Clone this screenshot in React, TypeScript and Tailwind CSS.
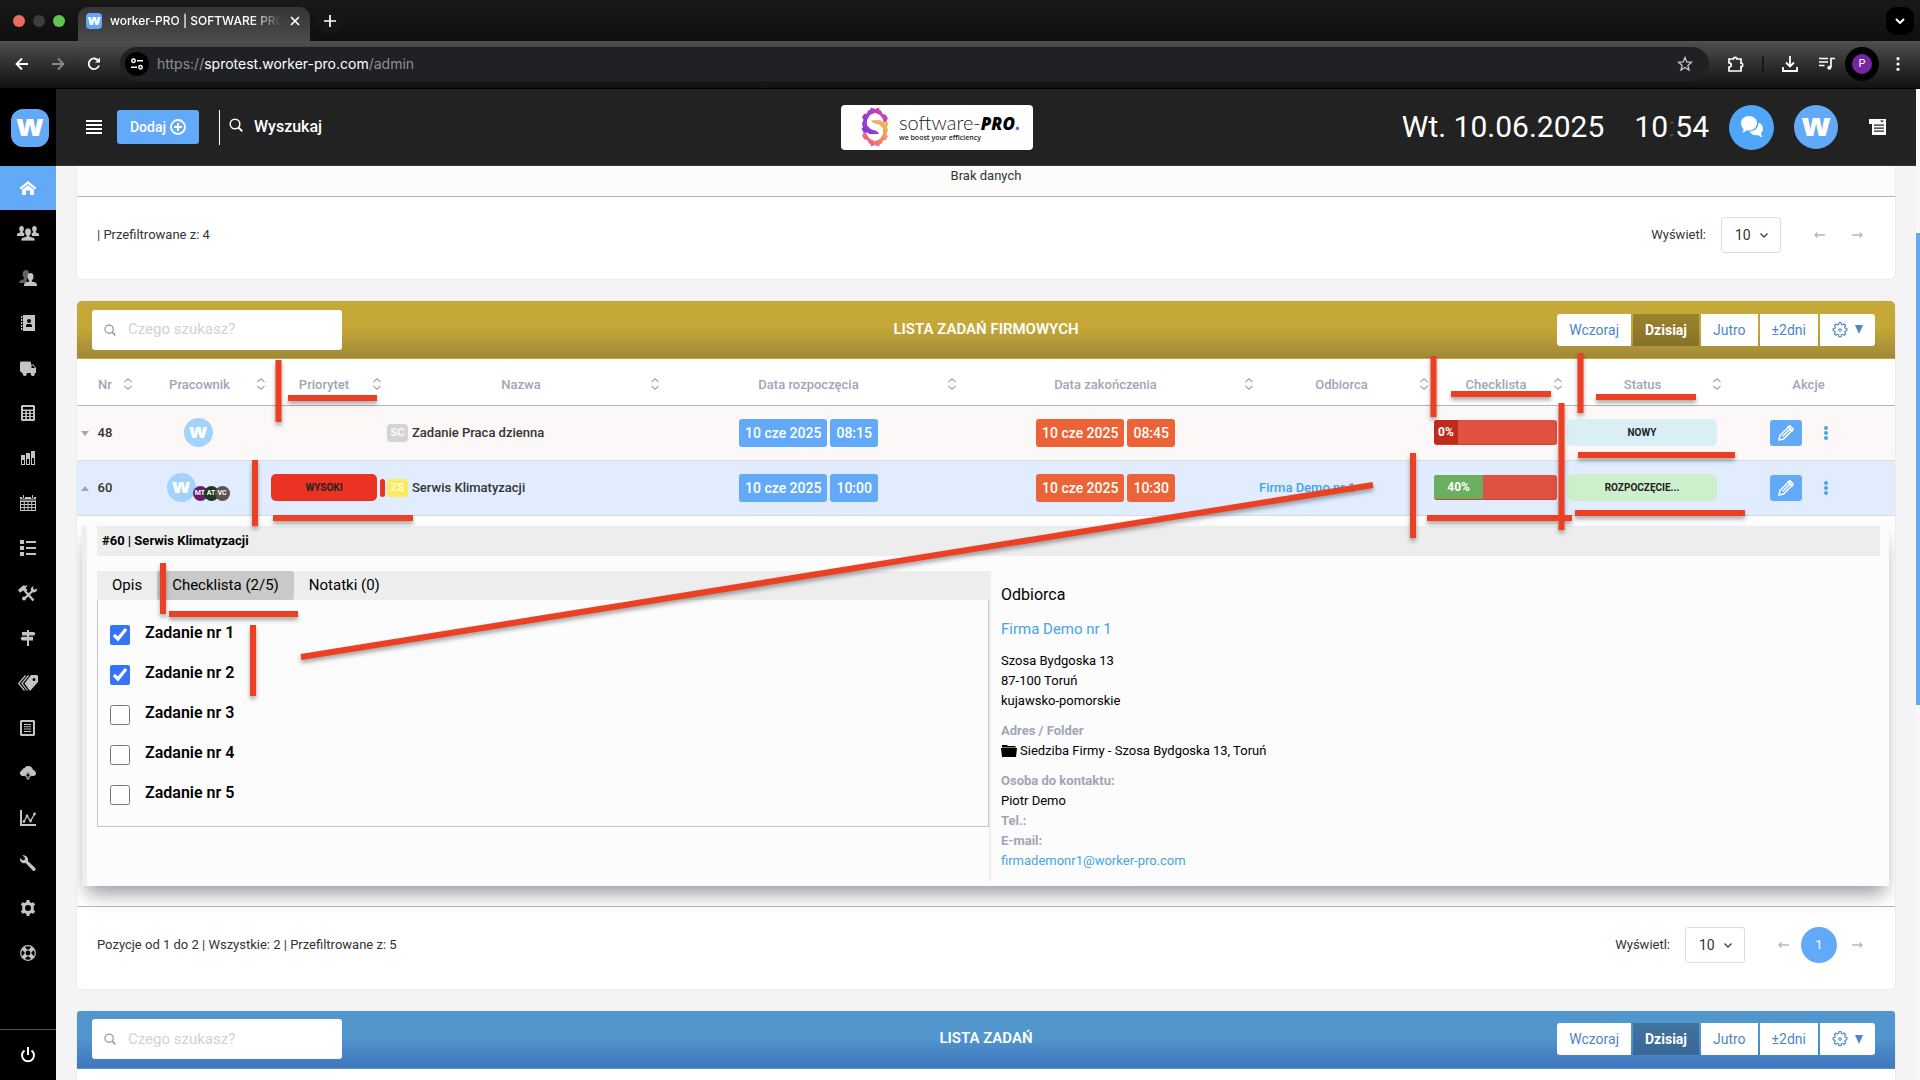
import { type JSX, type ReactNode } from 'react';

const NAV_ICONS: { label: string; icon: ReactNode }[] = [
  {
    label: 'Klienci',
    icon: (
      <svg viewBox="0 0 22 16" className="h-4 w-[22px]" fill="currentColor">
        <path d="M4.5 1c1.6 0 2.4 1.2 2.4 2.8 0 1.100-.4 2.200-1.100 2.800v1c1 .3 1.500.6 1.900 1l-1 2.400H0V9.800C0 8.500 1.500 8 3.300 7.600v-1C2.600 6 2.200 4.900 2.200 3.800 2.200 2.200 2.900 1 4.500 1z" />
        <path d="M17.500 1c-1.600 0-2.400 1.200-2.400 2.800 0 1.100.4 2.200 1.100 2.800v1c-1 .3-1.500.6-1.900 1l1 2.400H22V9.800c0-1.300-1.500-1.800-3.300-2.200v-1c.7-.6 1.100-1.700 1.100-2.800 0-1.600-.7-2.800-2.300-2.800z" />
        <path
          d="M11 3c2.200 0 3.300 1.600 3.300 3.700 0 1.500-.6 2.900-1.500 3.700v1.200c2.700.3 5.200 1.200 5.200 2.900V16H4v-1.500c0-1.700 2.500-2.600 5.200-2.900v-1.200c-.9-.8-1.500-2.200-1.500-3.700C7.700 4.600 8.800 3 11 3z"
          stroke="#000"
          strokeWidth="0.800"
        />
      </svg>
    ),
  },
  {
    label: 'Pracownicy',
    icon: (
      <svg viewBox="0 0 18 16" className="h-4 w-[18px]" fill="currentColor">
        <path
          d="M7 0c2.300 0 3.200 1.700 3 3.700-.2 1.700-1 3-1.800 3.600v1.500L7 13H0c0-2.300 2-3.300 4.800-3.800V7.500C4 6.700 3.600 5.400 3.600 4 3.600 1.800 4.700 0 7 0z"
          opacity="0.500"
        />
        <path d="M11.500 3c2.100 0 3.100 1.700 3 3.700-.1 1.700-.8 3-1.700 3.700v1.200c2.700.4 5.200 1.300 5.200 3.400v1H5v-1c0-2.100 2.500-3 5.200-3.400v-1.200c-.9-.7-1.600-2-1.700-3.700-.1-2 .9-3.700 3-3.700z" />
      </svg>
    ),
  },
  {
    label: 'Kontakty',
    icon: (
      <svg viewBox="0 0 16 16" className="size-4" fill="currentColor">
        <path fillRule="evenodd" d="M3 0h12v16H3zm6 4a2 2 0 1 0 0 4 2 2 0 0 0 0-4zM6 12h6v-1.500C12 9.300 10.800 9 9 9s-3 .3-3 1.500z" />
        <path d="M1 1h1.300v2H1zM1 4h1.300v2H1zM1 7h1.300v2H1zM1 10h1.300v2H1zM1 13h1.300v2H1z" />
      </svg>
    ),
  },
  {
    label: 'Flota',
    icon: (
      <svg viewBox="0 0 16 16" className="size-4" fill="currentColor">
        <path fillRule="evenodd" d="M1 1.500h9l1 1v2h2.500L16 8v5h-1.500a2 2 0 1 1-3.400 0H6.500a2 2 0 1 1-3.500 0H2l-2-2V2.500zM11.500 5.500V8H15l-1.900-2.500z" />
      </svg>
    ),
  },
  {
    label: 'Kalkulator',
    icon: (
      <svg viewBox="0 0 16 16" className="size-4" fill="currentColor">
        <path
          fillRule="evenodd"
          d="M2 0h12l1 1v14l-1 1H2l-1-1V1zM3 2v2.500h10V2zM3 6v2h2.300V6zm3.900 0v2h2.200V6zm3.800 0v2H13V6zM3 9v2h2.300V9zm3.900 0v2h2.200V9zm3.800 0v2H13V9zM3 12v2h2.300v-2zm3.900 0v2h2.200v-2zm3.800 0v2H13v-2z"
        />
      </svg>
    ),
  },
  {
    label: 'Raporty',
    icon: (
      <svg viewBox="0 0 16 16" className="size-4" fill="currentColor">
        <path fillRule="evenodd" d="M1 5h4v10H1zm1 5v4h2v-4zM6 3h4v12H6zm1 6v5h2V9zM11 1h4v14h-4zm1 7v6h2V8z" />
      </svg>
    ),
  },
  {
    label: 'Kalendarz',
    icon: (
      <svg viewBox="0 0 16 16" className="size-4" fill="currentColor">
        <path fillRule="evenodd" d="M0 5.500h16V16H0zM1 7v2h2.800V7zm3.800 0v2h2.700V7zm3.700 0v2h2.700V7zm3.700 0v2H15V7zM1 10v2h2.800v-2zm3.800 0v2h2.700v-2zm3.700 0v2h2.700v-2zm3.700 0v2H15v-2zM1 13v2h2.800v-2zm3.800 0v2h2.700v-2zm3.700 0v2h2.700v-2zm3.700 0v2H15v-2z" />
        <path d="M0 2h2v1.500h3V2h6v1.500h3V2h2v2.500H0zM3 0h1v3H3zM12 0h1v3h-1z" />
      </svg>
    ),
  },
  {
    label: 'Zadania',
    icon: (
      <svg viewBox="0 0 16 16" className="size-4" fill="currentColor">
        <path d="M0 0h4v4H0zM0 6h4v4H0zM0 12h4v4H0zM6 1h10v2H6zM6 7h10v2H6zM6 13h10v2H6z" />
      </svg>
    ),
  },
  {
    label: 'Serwis',
    icon: (
      <svg viewBox="0 0 20 16" className="h-4 w-5" fill="currentColor">
        <path d="M0 5l5-4.500 5 .3-2.500 2 1.800 2L7 7.500 5 5.500 2 7.800z" />
        <path d="M7.500 6.500l8 9M6 14l9-8.500" stroke="currentColor" strokeWidth="2.400" fill="none" />
        <path d="M13.500 6.800c-1.500-2.300-.3-5 2-5.800L15 3.500l1.800 1.300L19 3.500c.6 2.800-2 5-5.500 3.300z" />
        <circle cx="6" cy="13.500" r="2" />
      </svg>
    ),
  },
  {
    label: 'Lokalizacje',
    icon: (
      <svg viewBox="0 0 16 16" className="size-4" fill="currentColor">
        <path d="M7 0h2v2h5l1.500 1.800L14 5.600H9v1.200h4v3.600H9V16H7v-5.600H2L.5 8.600 2 6.800h5V5.600H2V2h5z" />
      </svg>
    ),
  },
  {
    label: 'Cennik',
    icon: (
      <svg viewBox="0 0 20 16" className="h-4 w-5" fill="currentColor">
        <path fillRule="evenodd" d="M13 0h6l1 1v6l-8 9-5.500-7.500zm3 3a1.500 1.500 0 1 0 0 3 1.500 1.500 0 0 0 0-3z" />
        <path d="M10.500.5L4 8.500 9.500 15.500M7.500.5L.7 8.500 6.500 15.500" fill="none" stroke="currentColor" strokeWidth="1.200" />
      </svg>
    ),
  },
  {
    label: 'Dokumenty',
    icon: (
      <svg viewBox="0 0 16 16" className="size-4" fill="currentColor">
        <path fillRule="evenodd" d="M1 0h13l1 1v14l-1 1H1l-1-1V1zm1 2v12h11V2z" />
        <path d="M4 4h7v1H4zM4 6.300h7v1H4zM4 8.600h7v1H4zM4 11h7v1H4z" />
      </svg>
    ),
  },
  {
    label: 'Chmura',
    icon: (
      <svg viewBox="0 0 16 16" className="size-4" fill="currentColor">
        <path d="M13 5c1.800.3 3 1.700 3 3.300C16 10 14.700 11 13 11h-1.500L8 7l-3.500 4H3c-1.700 0-3-1.200-3-2.800 0-1.500 1-2.600 2.300-2.900C2.400 3.500 3.600 3 4.500 3.200 5.200 1.900 6.500 1 8.200 1 10.800 1 12.800 2.700 13 5z" />
        <path d="M8 7.800l3 3.200H9v3H7v-3H5z" fill="#000" stroke="currentColor" strokeWidth="1" />
      </svg>
    ),
  },
  {
    label: 'Statystyki',
    icon: (
      <svg viewBox="0 0 16 16" className="size-4" fill="none" stroke="currentColor">
        <path d="M1 0v15h15" strokeWidth="2" />
        <path d="M4 11.500L7 6l3.500 5L14.500 4" strokeWidth="1.300" />
        <path d="M4 11.500h.01M7 6h.01M10.500 11h.01M14.500 4h.01" strokeWidth="2.800" strokeLinecap="round" />
      </svg>
    ),
  },
  {
    label: 'Narzędzia',
    icon: (
      <svg viewBox="0 0 16 16" className="size-4" fill="currentColor">
        <path d="M2.500.4L5 2.800 4.600 5l-2.100.2L.3 3C-.5 5.500.8 8 3.500 8.200c.8.100 1.500 0 2.200-.3l7 7.500c.6.700 1.700.8 2.400.1.700-.6.700-1.700.1-2.400l-7.300-7C8.400 4.600 8 3 7 1.800 6 .6 4.200-.3 2.500.4z" />
      </svg>
    ),
  },
  {
    label: 'Ustawienia',
    icon: (
      <svg viewBox="0 0 16 16" className="size-4" fill="currentColor">
        <path
          fillRule="evenodd"
          d="M6.700 0h2.600l.4 2 1.700 1 2-.8L15.200 4.500l-1.500 1.600v3.800l1.500 1.600-1.800 2.300-2-.8-1.700 1-.4 2H6.700l-.4-2-1.700-1-2 .8L.8 11.500l1.500-1.600V6.100L.8 4.500l1.800-2.300 2 .8 1.700-1zM8 5a3 3 0 1 0 0 6 3 3 0 0 0 0-6z"
        />
      </svg>
    ),
  },
  {
    label: 'Pomoc',
    icon: (
      <svg viewBox="0 0 16 16" className="size-4" fill="none" stroke="currentColor">
        <circle cx="8" cy="8" r="7.300" strokeWidth="1.200" />
        <circle cx="8" cy="8" r="3" strokeWidth="1.200" />
        <path d="M3 3l2.800 2.800M13 3l-2.800 2.800M3 13l2.800-2.800M13 13l-2.800-2.800" strokeWidth="4" />
      </svg>
    ),
  },
];

const COLUMNS = [
  { name: 'Nr', width: 'w-[56px]', sort: true },
  { name: 'Pracownik', width: 'w-[133px]', sort: true },
  { name: 'Priorytet', width: 'w-[116px]', sort: true },
  { name: 'Nazwa', width: 'w-[278px]', sort: true },
  { name: 'Data rozpoczęcia', width: 'w-[297px]', sort: true },
  { name: 'Data zakończenia', width: 'w-[297px]', sort: true },
  { name: 'Odbiorca', width: 'w-[175px]', sort: true },
  { name: 'Checklista', width: 'w-[134px]', sort: true },
  { name: 'Status', width: 'w-[159px]', sort: true },
  { name: 'Akcje', width: 'w-[173px]', sort: false },
];

const TASKS = [
  { id: 1, done: true },
  { id: 2, done: true },
  { id: 3, done: false },
  { id: 4, done: false },
  { id: 5, done: false },
];

function SearchIcon({ className }: { className: string }): JSX.Element {
  return (
    <svg viewBox="0 0 14 14" className={className} fill="none" stroke="currentColor">
      <circle cx="6" cy="6" r="4.800" strokeWidth="1.500" />
      <path d="M9.500 9.500l3.800 3.800" strokeWidth="1.900" />
    </svg>
  );
}

function LetterLogo({ className }: { className: string }): JSX.Element {
  return (
    <span
      className={`flex shrink-0 items-center justify-center font-['Open_Sans',sans-serif] font-extrabold text-white ${className}`}
    >
      w
    </span>
  );
}

function BrowserBar(): JSX.Element {
  return (
    <div className="shrink-0 font-['Inter',sans-serif]">
      <div className="flex h-[41px] items-end bg-linear-to-b from-[#191919] to-[#0e0e0e] pr-1.5">
        <div className="flex h-full w-[78px] items-center gap-2 pl-[13px]">
          <span className="size-3 rounded-full bg-[#ed6a5e]" />
          <span className="size-3 rounded-full bg-[#3d3d3d]" />
          <span className="size-3 rounded-full bg-[#61c554]" />
        </div>
        <div className="flex h-[34px] w-[232px] items-center rounded-t-[10px] bg-linear-to-b from-[#353535] to-[#4a4a4a] px-2 pb-1.5">
          <LetterLogo className="size-4 rounded bg-[#62a9f8] pb-0.5 text-sm leading-none" />
          <span className="ml-2 w-[172px] text-xs font-medium whitespace-nowrap text-white [mask-image:linear-gradient(to_right,black_82%,transparent)]">
            worker-PRO | SOFTWARE PRO
          </span>
          <button aria-label="Zamknij kartę" className="ml-2">
            <svg viewBox="0 0 10 10" className="size-2.5" stroke="#fff" strokeWidth="1.700">
              <path d="M1 1l8 8M9 1l-8 8" />
            </svg>
          </button>
        </div>
        <button aria-label="Nowa karta" className="ml-1.5 flex size-[27px] items-center justify-center self-center rounded-full bg-[#161616]">
          <svg viewBox="0 0 12 12" className="size-3" stroke="#fff" strokeWidth="1.700">
            <path d="M6 0v12M0 6h12" />
          </svg>
        </button>
        <button aria-label="Karty" className="ml-auto flex size-7 items-center justify-center self-center rounded-[10px] bg-black">
          <svg viewBox="0 0 10 6" className="h-1.5 w-2.5" fill="none" stroke="#fff" strokeWidth="2">
            <path d="M1 1l4 4 4-4" />
          </svg>
        </button>
      </div>
      <div className="flex h-12 items-center border-b border-black bg-linear-to-b from-[#505050] to-[#111] pr-5 pb-0.5 pl-[15px]">
        <button aria-label="Wstecz">
          <svg viewBox="0 0 14 14" className="size-3.5" fill="none" stroke="#fff" strokeWidth="1.800">
            <path d="M13 7H1.500M7 1.500L1.500 7 7 12.500" />
          </svg>
        </button>
        <button aria-label="Dalej" className="ml-[22px]">
          <svg viewBox="0 0 14 14" className="size-3.5" fill="none" stroke="#8a8a8a" strokeWidth="1.800">
            <path d="M1 7h11.500M7 1.500L12.500 7 7 12.500" />
          </svg>
        </button>
        <button aria-label="Odśwież" className="ml-[22px]">
          <svg viewBox="0 0 14 14" className="size-3.5" fill="none" stroke="#fff" strokeWidth="1.800">
            <path d="M12 8.500A5.300 5.300 0 1 1 11.500 4" />
            <path d="M13 .5v5H8z" fill="#fff" stroke="none" />
          </svg>
        </button>
        <div className="ml-[19px] flex h-[34px] flex-1 items-center rounded-full bg-[#202124] pr-4 pl-[5px]">
          <span className="flex size-6 items-center justify-center rounded-full bg-black">
            <svg viewBox="0 0 12 12" className="size-3" fill="none" stroke="#fff" strokeWidth="1.500">
              <circle cx="2.500" cy="2.700" r="1.700" />
              <circle cx="9.500" cy="9.300" r="1.700" />
              <path d="M6 2.700h6M0 9.300h6" />
            </svg>
          </span>
          <span className="ml-2 text-sm text-[#8f8f91]">
            https://<span className="text-white">sprotest.worker-pro.com</span>/admin
          </span>
          <svg viewBox="0 0 16 16" className="ml-auto size-4" fill="none" stroke="#c7c7c7" strokeWidth="1.300">
            <path d="M8 1.500l1.800 4.400 4.700.4-3.600 3.100 1.100 4.600L8 11.500 4 14l1.100-4.600L1.500 6.300l4.700-.4z" />
          </svg>
        </div>
        <svg viewBox="0 0 18 18" className="ml-[18px] size-[18px]" fill="none" stroke="#fff" strokeWidth="1.700">
          <path d="M2 4h4.500a1.700 1.700 0 0 1 3.400 0H14v4.200a1.700 1.700 0 0 1 0 3.400V16H2v-3.800c3-.5 3-4 0-4.400z" />
        </svg>
        <span className="ml-[17px] h-4 w-0.5 bg-[#181818]" />
        <svg viewBox="0 0 16 16" className="ml-[18px] size-4" fill="none" stroke="#fff" strokeWidth="1.800">
          <path d="M8 0v10M4 6.500l4 4 4-4M1 11v4h14v-4" />
        </svg>
        <svg viewBox="0 0 16 14" className="ml-[21px] h-3.5 w-4" fill="none" stroke="#fff" strokeWidth="1.700">
          <path d="M0 1.500h9M0 5h9M0 8.500h5.500M12 10.500V1.500h4" />
          <circle cx="10.300" cy="10.800" r="2" fill="#fff" stroke="none" />
        </svg>
        <span className="ml-2.5 flex size-[34px] items-center justify-center rounded-full bg-black">
          <span className="flex size-5 items-center justify-center rounded-full bg-[#7627a0] text-[11px] text-white">P</span>
        </span>
        <button aria-label="Menu przeglądarki" className="ml-[17px]">
          <svg viewBox="0 0 4 14" className="h-3.5 w-1" fill="#fff">
            <circle cx="2" cy="1.700" r="1.600" />
            <circle cx="2" cy="7" r="1.600" />
            <circle cx="2" cy="12.300" r="1.600" />
          </svg>
        </button>
      </div>
    </div>
  );
}

function Sidebar(): JSX.Element {
  return (
    <aside className="flex w-14 shrink-0 flex-col bg-black text-[#c4c4c4]">
      <div className="flex h-[77px] items-center justify-center pl-1">
        <LetterLogo className="size-[38px] rounded-xl bg-[#62a9f8] pb-1.5 text-[30px] leading-none" />
      </div>
      <nav className="flex flex-col">
        <a href="#home" aria-label="Start" className="flex h-11 items-center justify-center bg-[#62a9f8] text-white">
          <svg viewBox="0 0 16 16" className="size-4" fill="currentColor">
            <path d="M8 1l8 6.500v1.800l-1 .3L8 4 1 9.600l-1-.3V7.500z" />
            <path d="M2 9.800L8 5.200l6 4.600V15h-4v-4.500H6V15H2z" />
          </svg>
        </a>
        {NAV_ICONS.map((item) => (
          <a key={item.label} href="#nav" aria-label={item.label} className="flex h-[45px] items-center justify-center">
            {item.icon}
          </a>
        ))}
      </nav>
      <a
        href="#logout"
        aria-label="Wyloguj"
        className="mt-auto flex h-[51px] items-center justify-center border-t border-[#555] text-white"
      >
        <svg viewBox="0 0 16 16" className="size-4" fill="none" stroke="currentColor" strokeWidth="2">
          <path d="M8 0v8M4.500 3.500a6 6 0 1 0 7 0" />
        </svg>
      </a>
    </aside>
  );
}

function CompanyLogo(): JSX.Element {
  return (
    <div className="flex h-[45px] w-48 items-center rounded bg-white pl-5 font-['Lato',sans-serif]">
      <svg viewBox="0 0 28 40" className="h-10 w-7" fill="none">
        <defs>
          <linearGradient id="top" x1="0" y1="1" x2="1" y2="0">
            <stop offset="0" stopColor="#5b35f5" />
            <stop offset="1" stopColor="#f0449c" />
          </linearGradient>
          <linearGradient id="bottom" x1="0" y1="1" x2="1" y2="0">
            <stop offset="0" stopColor="#e8468f" />
            <stop offset="1" stopColor="#f8c950" />
          </linearGradient>
        </defs>
        <path
          d="M27 18l-1.500-4.500 1.500-2-2.500-4-3-.5L20 3.500 18.500 3 18 .5 14 2 10 .5 9 3 7 3.500 6 6.500 3 7 1 10.500l1.500 2L1 17l1 3-1.500 2L3 25.500l3-.5 3 2 9-.5-2.500-2.500-5.500-1.500-4-4v-5.500L9 8l5-2.200L19 8l3 4 .5 3z"
          fill="url(#top)"
        />
        <path
          d="M1 22l1.500 4.500-1.500 2 2.500 4 3 .5L8 36.500l1.500.5.5 2.500 4-1.500 4 1.500 1-2.500 2-.5 1-3 3-.5 2-3.500-1.500-2L27 23l-1-3 1.500-2L25 14.500l-3 .5-3-2-9 .5 2.500 2.500 5.500 1.500 4 4v5.500L19 32l-5 2.200L9 32l-3-4-.5-3z"
          fill="url(#bottom)"
        />
        <path d="M3 25.500l3-.5 3 2h9l-2.500-3-5.500-1.500-4-4v-5l-4 2 .5 3.500-1 3z" fill="url(#top)" />
      </svg>
      <div className="ml-2.5">
        <div className="text-xl leading-5 font-light whitespace-nowrap text-[#222]">
          software-<span className="font-['Open_Sans',sans-serif] text-[17px] leading-5 font-extrabold text-black italic">PRO</span>
          <span className="font-black text-[#a63ae0]">.</span>
        </div>
        <div className="font-['Open_Sans',sans-serif] text-[7px] leading-2 font-semibold text-[#222]">we boost your efficiency</div>
      </div>
    </div>
  );
}

function Header(): JSX.Element {
  return (
    <header className="grid h-[77px] shrink-0 grid-cols-[8fr_auto_9fr] items-center border-b border-[#3a3537] bg-[#222] text-white">
      <div className="flex items-center pl-[30px]">
        <button aria-label="Menu">
          <svg viewBox="0 0 16 14" className="h-3.5 w-4" fill="#fff">
            <path d="M0 0h16v2H0zM0 4h16v2H0zM0 8h16v2H0zM0 12h16v2H0z" />
          </svg>
        </button>
        <button className="ml-[15px] flex h-[34px] w-[82px] items-center justify-center gap-1 rounded-[3px] bg-[#62a9f8] text-sm font-medium">
          Dodaj
          <svg viewBox="0 0 16 16" className="size-4" fill="none" stroke="#fff" strokeWidth="1.800">
            <circle cx="8" cy="8" r="7" />
            <path d="M8 4v8M4 8h8" strokeWidth="2" />
          </svg>
        </button>
        <label className="ml-5 flex h-[35px] items-center border-l border-white pl-[9px]">
          <SearchIcon className="mb-1 size-3.5" />
          <input
            type="text"
            aria-label="Wyszukaj"
            placeholder="Wyszukaj"
            className="ml-[11px] w-60 bg-transparent text-base font-medium outline-none placeholder:text-white"
          />
        </label>
      </div>
      <CompanyLogo />
      <div className="flex items-center justify-end pr-[30px]">
        <span className="text-[30px] leading-9 whitespace-nowrap">Wt. 10.06.2025</span>
        <span className="ml-[30px] text-[30px] leading-9">
          10<span className="text-[#444]">:</span>54
        </span>
        <button aria-label="Czat" className="ml-5 flex size-[45px] items-center justify-center rounded-full bg-[#50a6f7]">
          <svg viewBox="0 0 22 22" className="size-[22px]" fill="#fff">
            <path d="M8 0c4.500 0 8 3 8 7s-3.500 7.500-8 7.500c-.8 0-1.600-.1-2.300-.3C4.500 15.500 3 16.500 1 16.500c1-1 1.500-2.300 1.500-3.600C1 11.500 0 9.500 0 7c0-4 3.500-7 8-7z" />
            <path d="M17.500 6.500c2.500 1 4.500 3.200 4.500 6 0 2-.8 3.500-2 4.600 0 1.500.5 2.900 1.500 3.900-2 0-3.500-.7-4.600-2-4 .8-7-1-8.400-3.500 5-.3 9.200-3.500 9-9z" />
          </svg>
        </button>
        <LetterLogo className="ml-5 size-11 rounded-full bg-[#62a9f8] pb-1.5 text-[32px] leading-none" />
        <button aria-label="Aktualności" className="ml-[31px]">
          <svg viewBox="0 0 17 16" className="h-4 w-[17px]" fill="#fff">
            <path fillRule="evenodd" d="M0 0h17v16H3V5H0zM5 5.500v1.200h10V5.500zm0 3v1.200h10V8.500zm0 3v1.200h10v-1.200zM11 1.500L13 3.500 15 1.500z" />
          </svg>
        </button>
      </div>
    </header>
  );
}

function Arrow({ right = false }: { right?: boolean }): JSX.Element {
  return (
    <svg viewBox="0 0 11 6" className="h-1.5 w-[11px]" fill="none" stroke="#b8b8b8" strokeWidth="1.300">
      {right ? <path d="M0 3h10M7.500.5L10 3 7.500 5.500" /> : <path d="M11 3H1M3.500.5L1 3l2.500 2.500" />}
    </svg>
  );
}

function TableFooter({ id, info, page }: { id: string; info: string; page?: number }): JSX.Element {
  return (
    <div className="flex items-center border-t border-[#b5b5b5] px-5 pt-5 pb-[26px] text-[13px] leading-5 text-[#333]">
      <span>{info}</span>
      <label htmlFor={id} className="ml-auto">
        Wyświetl:
      </label>
      <div className="relative ml-[15px]">
        <select id={id} className="h-9 w-[60px] appearance-none rounded-[3px] border border-[#ddd] bg-white pl-[13px] text-sm text-[#333]">
          <option>10</option>
        </select>
        <svg viewBox="0 0 8 5" className="pointer-events-none absolute top-4 right-[13px] h-[5px] w-2" fill="none" stroke="#444" strokeWidth="1.400">
          <path d="M.5.500L4 4 7.500.500" />
        </svg>
      </div>
      <div className="ml-5 flex items-center">
        <button aria-label="Poprzednia" className="flex size-9 items-center justify-center">
          <Arrow />
        </button>
        {page !== undefined && (
          <button className="flex size-9 items-center justify-center rounded-full bg-[#62a9f8] text-white">{page}</button>
        )}
        <button aria-label="Następna" className="ml-0.5 flex size-9 items-center justify-center">
          <Arrow right />
        </button>
      </div>
    </div>
  );
}

function ListHeader({ title, className, activeClassName }: { title: string; className: string; activeClassName: string }): JSX.Element {
  const button = 'flex h-8 items-center bg-white px-3 text-sm text-[#4d86c8]';
  return (
    <div className={`grid h-[58px] grid-cols-[1fr_auto_1fr] items-center rounded-t-[3px] border-b px-5 ${className}`}>
      <label className="-ml-[5px] flex h-10 w-[250px] items-center rounded-[3px] bg-white pl-3 text-[#999]">
        <SearchIcon className="size-3" />
        <input
          type="text"
          aria-label={`Szukaj: ${title}`}
          placeholder="Czego szukasz?"
          className="ml-3 w-48 text-[15px] text-[#333] outline-none placeholder:text-[#d2d2d2]"
        />
      </label>
      <h2 className="pb-0.5 text-[15px] leading-5 font-semibold text-white">{title}</h2>
      <div className="flex gap-0.5 justify-self-end">
        <button className={`${button} rounded-l-[3px]`}>Wczoraj</button>
        <button className={`flex h-8 items-center px-3 text-sm font-bold text-white ${activeClassName}`}>Dzisiaj</button>
        <button className={button}>Jutro</button>
        <button className={button}>±2dni</button>
        <button aria-label="Opcje" className={`${button} gap-[7px] rounded-r-[3px]`}>
          <svg viewBox="0 0 16 16" className="size-4" fill="none" stroke="currentColor">
            <path
              strokeWidth="1.100"
              strokeLinejoin="round"
              d="M6.900.6h2.200l.3 1.800 1.200.5 1.500-1.100 1.600 1.600-1.100 1.500.5 1.200 1.800.3v2.400l-1.800.3-.5 1.200 1.100 1.500-1.600 1.600-1.500-1.100-1.200.5-.3 1.800H6.900l-.3-1.800-1.200-.5-1.500 1.100-1.600-1.600 1.100-1.500-.5-1.200-1.800-.3V6.600l1.800-.3.500-1.200-1.100-1.500 1.600-1.600 1.500 1.100 1.200-.5z"
            />
            <circle cx="8" cy="8" r="1.300" />
          </svg>
          <svg viewBox="0 0 8 9" className="h-[9px] w-2" fill="currentColor">
            <path d="M0 0h8L4 9z" />
          </svg>
        </button>
      </div>
    </div>
  );
}

function DateBadges({ date, time, color }: { date: string; time: string; color: string }): JSX.Element {
  return (
    <div className="flex justify-center gap-[3px] text-sm leading-7 font-medium text-white">
      <span className={`rounded-[3px] px-1.5 ${color}`}>{date}</span>
      <span className={`rounded-[3px] px-1.5 ${color}`}>{time}</span>
    </div>
  );
}

function Progress({ value, color }: { value: number; color: string }): JSX.Element {
  return (
    <div className="mr-1.5 ml-[5px] h-[25px] overflow-hidden rounded-[3px] border-b border-[#c94436] bg-[#e15141]">
      <div
        className={`h-full min-w-6 text-center text-xs leading-[24px] font-bold text-white ${color}`}
        style={{ width: `${value}%` }}
      >
        {value}%
      </div>
    </div>
  );
}

function Actions(): JSX.Element {
  return (
    <div className="flex items-center justify-center gap-[22px] pr-5">
      <button aria-label="Edytuj" className="flex h-[26px] w-8 items-center justify-center rounded-[3px] bg-[#62a9f8]">
        <svg viewBox="0 0 16 16" className="size-4" fill="none" stroke="#fff" strokeWidth="1.500">
          <path d="M2 10.500L10.500 2 14 5.500 5.500 14 1 15z" />
          <path d="M4.500 11.500l7-7M10 2l2-1.200L15.200 4 14 6z" />
        </svg>
      </button>
      <button aria-label="Więcej">
        <svg viewBox="0 0 4 14" className="h-3.5 w-1" fill="#46a4e4">
          <circle cx="2" cy="2" r="2" />
          <circle cx="2" cy="7" r="2" />
          <circle cx="2" cy="12" r="2" />
        </svg>
      </button>
    </div>
  );
}

function TaskDetails(): JSX.Element {
  return (
    <div className="mr-1.5 ml-[5px] border-l-[5px] border-[#eee] bg-[#fcfcfc] pr-1 pb-[5px] pl-2.5 text-left text-[13px] text-black shadow-[0_14px_18px_-6px_rgba(70,65,85,0.45),0_6px_14px_rgba(70,65,85,0.12)]">
      <div className="mr-[5px] h-[30px] bg-[#ededed] pl-[5px] text-[13px] leading-[30px] font-bold">#60 | Serwis Klimatyzacji</div>
      <div className="mt-[15px] grid grid-cols-2">
        <div className="border-r-2 border-[#eee]">
          <div role="tablist" className="flex h-[29px] bg-[#ededed] text-[15px]">
            <button role="tab" className="px-[15px]">
              Opis
            </button>
            <button role="tab" aria-selected="true" className="rounded-[3px] bg-[#c9c9c9] px-[15px]">
              Checklista (2/5)
            </button>
            <button role="tab" className="px-[15px]">
              Notatki (0)
            </button>
          </div>
          <div className="border border-t-0 border-[#c4c4c4] pt-[23px] pb-[3px] pl-3">
            {TASKS.map((task) => (
              <label key={task.id} className="flex h-10 items-start gap-[15px] text-base leading-5 font-semibold">
                <input type="checkbox" defaultChecked={task.done} className="mt-0.5 size-5 accent-[#3574f6]" />
                Zadanie nr {task.id}
              </label>
            ))}
          </div>
        </div>
        <div className="pt-3.5 pb-[10px] pl-2.5 leading-5">
          <h3 className="text-base leading-5">Odbiorca</h3>
          <a href="#firma" className="mt-3.5 block text-[15px] leading-5 text-[#46a4e4]">
            Firma Demo nr 1
          </a>
          <p className="mt-3">
            Szosa Bydgoska 13
            <br />
            87-100 Toruń
            <br />
            kujawsko-pomorskie
          </p>
          <p className="mt-2.5 font-bold text-[#a1a5b7]">Adres / Folder</p>
          <p className="flex items-center gap-[3px]">
            <svg viewBox="0 0 16 13" className="h-[13px] w-4" fill="currentColor">
              <path d="M1 1h5l1 1h7l1 1v.5H1zM0 4h16l-1 9H1z" />
            </svg>
            Siedziba Firmy - Szosa Bydgoska 13, Toruń
          </p>
          <p className="mt-2.5 font-bold text-[#a1a5b7]">Osoba do kontaktu:</p>
          <p>Piotr Demo</p>
          <p className="font-bold text-[#a1a5b7]">Tel.:</p>
          <p className="font-bold text-[#a1a5b7]">E-mail:</p>
          <a href="mailto:firmademonr1@worker-pro.com" className="block text-[#46a4e4]">
            firmademonr1@worker-pro.com
          </a>
        </div>
      </div>
    </div>
  );
}

function CompanyTasks(): JSX.Element {
  return (
    <table className="w-full table-fixed border-collapse text-center text-[13px] text-[#333]">
      <thead>
        <tr className="h-[46px] border-b border-[#b5b5b5] text-[#a1a5b7]">
          {COLUMNS.map((column) => (
            <th key={column.name} className={`relative pt-[5px] font-medium ${column.width}`}>
              {column.name}
              {column.sort && (
                <svg viewBox="0 0 8 12" className="absolute top-[19px] right-px h-3 w-2" fill="none" stroke="#a1a5b7" strokeWidth="1.200">
                  <path d="M.5 4L4 .8 7.500 4M.5 8L4 11.200 7.500 8" />
                </svg>
              )}
            </th>
          ))}
        </tr>
      </thead>
      <tbody>
        <tr className="h-[55px] border-b border-[#dcdcdc] bg-[#fdf8f8]">
          <td className="relative font-medium">
            <svg viewBox="0 0 8 5" className="absolute top-[25px] left-1 h-[5px] w-2" fill="#a1a5b7">
              <path d="M0 0h8L4 5z" />
            </svg>
            48
          </td>
          <td className="pr-[3px]">
            <LetterLogo className="mx-auto size-[29px] rounded-full bg-[#a1d3fb] pb-1 text-xl leading-none" />
          </td>
          <td />
          <td>
            <div className="flex items-center gap-1 pl-[5px] font-medium">
              <span className="h-[18px] w-[21px] rounded bg-[#d4d4d4] text-[11px] leading-[18px] text-white">SC</span>
              Zadanie Praca dzienna
            </div>
          </td>
          <td>
            <DateBadges date="10 cze 2025" time="08:15" color="bg-[#62a9f8]" />
          </td>
          <td>
            <DateBadges date="10 cze 2025" time="08:45" color="bg-[#ec6337]" />
          </td>
          <td />
          <td>
            <Progress value={0} color="bg-[#c02a1c]" />
          </td>
          <td>
            <div className="mr-[5px] ml-1 h-[27px] rounded-[5px] bg-[#daeef5] text-[10px] leading-[27px] font-bold text-[#222]">NOWY</div>
          </td>
          <td>
            <Actions />
          </td>
        </tr>
        <tr className="h-[55px] border-b border-[#d5d9e0] bg-[#e1edfe]">
          <td className="relative font-medium">
            <svg viewBox="0 0 8 5" className="absolute top-[25px] left-1 h-[5px] w-2" fill="#a1a5b7">
              <path d="M0 5h8L4 0z" />
            </svg>
            60
          </td>
          <td className="pr-[3px]">
            <div className="flex items-center justify-center text-[7px] leading-[15px] font-bold text-white">
              <LetterLogo className="size-[29px] rounded-full bg-[#a1d3fb] pb-1 text-xl leading-none" />
              <span className="mt-3 -ml-[3px] size-[15px] rounded-full bg-[#6b1d6b]">MT</span>
              <span className="mt-3 -ml-1 size-[15px] rounded-full bg-[#1e3a1e]">AT</span>
              <span className="mt-3 -ml-1 size-[15px] rounded-full bg-[#5d5355]">VC</span>
            </div>
          </td>
          <td>
            <div className="mr-[5px] ml-[5px] h-[27px] rounded-[5px] bg-[#ea3323] text-[10px] leading-[27px] font-bold text-[#222]">WYSOKI</div>
          </td>
          <td>
            <div className="-ml-0.5 flex items-center font-medium">
              <span className="mr-0.5 h-[18px] w-[5px] rounded-sm bg-[#ea3323]" />
              <span className="mr-1 h-[18px] w-[21px] rounded bg-[#fbec5b] text-[11px] leading-[18px] text-white">ZS</span>
              Serwis Klimatyzacji
            </div>
          </td>
          <td>
            <DateBadges date="10 cze 2025" time="10:00" color="bg-[#62a9f8]" />
          </td>
          <td>
            <DateBadges date="10 cze 2025" time="10:30" color="bg-[#ec6337]" />
          </td>
          <td className="pl-[5px] text-left">
            <a href="#firma" className="font-medium text-[#46a4e4]">
              Firma Demo nr 1
            </a>
          </td>
          <td>
            <Progress value={40} color="bg-[#6aae5f]" />
          </td>
          <td>
            <div className="mr-[5px] ml-1 h-[27px] rounded-[5px] bg-[#ccf0cc] text-[10px] leading-[27px] font-bold text-[#222]">
              ROZPOCZĘCIE...
            </div>
          </td>
          <td>
            <Actions />
          </td>
        </tr>
        <tr>
          <td colSpan={10} className="pt-2.5 pb-5">
            <TaskDetails />
          </td>
        </tr>
      </tbody>
    </table>
  );
}

// red marker strokes drawn over the page
function Markers(): JSX.Element {
  return (
    <svg
      className="pointer-events-none absolute top-0 left-0 h-[1080px] w-[1920px] drop-shadow-[0_3px_2px_rgba(0,0,0,0.35)]"
      viewBox="0 0 1920 1080"
      fill="none"
      stroke="#ec4024"
      strokeWidth="6"
    >
      <path d="M278.500 360v62M255 460v66M1433.500 356v61M1580.500 353v60M1561.500 403v127M1413 453v85M163 563v51M253 625v71" />
      <path d="M288 398h89M273 518h140M1451 394h100M1596 397h100M1578 455h157M1427 518h145M1575 513h170M169 614h129" />
      <path d="M301 657L1373 485" />
    </svg>
  );
}

export default function App(): JSX.Element {
  return (
    <div className="relative flex h-screen flex-col overflow-hidden bg-[#f4f4f4] font-['Roboto',sans-serif]">
      <BrowserBar />
      <div className="flex min-h-0 flex-1">
        <Sidebar />
        <div className="flex min-w-0 flex-1 flex-col">
          <Header />
          <main className="flex min-h-0 flex-1 flex-col gap-5 overflow-hidden px-5">
            <section className="shrink-0 rounded-b-md border border-t-0 border-[#ececec] bg-white">
              <p className="h-[30px] bg-[#fcfcfc] text-center text-[13px] leading-5 text-[#333]">Brak danych</p>
              <TableFooter id="size-1" info="| Przefiltrowane z: 4" />
            </section>
            <section className="shrink-0 overflow-hidden rounded-md border border-[#ececec] bg-white">
              <ListHeader
                title="LISTA ZADAŃ FIRMOWYCH"
                className="border-[#c5a837] bg-linear-to-b from-[#c5a837] from-45% to-[#a18838]"
                activeClassName="bg-linear-to-b from-[#9b832b] to-[#87722c]"
              />
              <CompanyTasks />
              <TableFooter id="size-2" info="Pozycje od 1 do 2 | Wszystkie: 2 | Przefiltrowane z: 5" page={1} />
            </section>
            <section className="shrink-0 rounded-md border border-[#ececec] bg-white">
              <ListHeader
                title="LISTA ZADAŃ"
                className="border-[#5196cd] bg-linear-to-b from-[#5196cd] from-45% to-[#4076be]"
                activeClassName="bg-linear-to-b from-[#41749f] to-[#3a6797]"
              />
              <div className="h-20" />
            </section>
          </main>
        </div>
        <div className="w-1 shrink-0 bg-[#f8f8f8] pt-36">
          <div className="h-[472px] bg-[#62a9f8]" />
        </div>
      </div>
      <Markers />
    </div>
  );
}
